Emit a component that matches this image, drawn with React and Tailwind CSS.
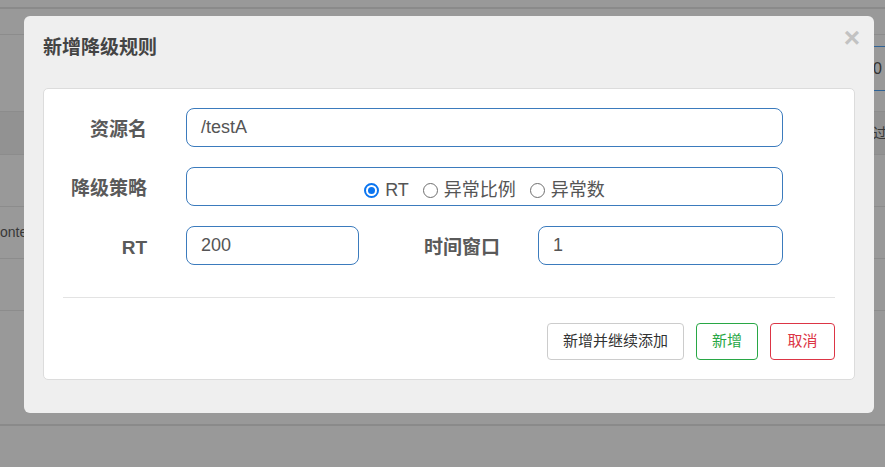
import React from 'react';

const font = "font-['Liberation_Sans','Noto_Sans_CJK_SC',sans-serif]";

const Label = ({ children, className = '' }) => (
  <div className={`text-[19px] leading-[24px] font-bold text-[#5a5a5a] ${className}`}>{children}</div>
);

const Field = ({ value, className = '' }) => (
  <div className={`h-[39px] border border-[#3b7bbd] rounded-[8px] bg-white px-[14px] flex items-center text-[18px] text-[#555] ${className}`}>
    {value}
  </div>
);

const Radio = ({ label, checked }) => (
  <div className="flex items-center gap-[6px] text-[18px] text-[#555]">
    {checked ? (
      <span className="w-[15px] h-[15px] rounded-full border-2 border-[#0b75f0] flex items-center justify-center">
        <span className="w-[7px] h-[7px] rounded-full bg-[#0b75f0]" />
      </span>
    ) : (
      <span className="w-[15px] h-[15px] rounded-full border border-[#6f6f6f] bg-white" />
    )}
    <span>{label}</span>
  </div>
);

const App = () => {
  return (
    <div className={`relative w-[885px] h-[467px] overflow-hidden bg-[#999] ${font}`}>
      {/* page behind the overlay */}
      <div className="flex flex-col text-[14px] text-[#383838]">
        <div className="h-[9px] border-b-2 border-[#8a8a8a]" />
        <div className="h-[26px] border-b border-[#8c8c8c]" />
        <div className="h-[77px] border-b border-[#8c8c8c] flex justify-end items-start">
          <div className="mt-[11px] w-[20px] h-[45px] border-y border-[#2f6396] flex items-center pl-[8px] text-[16px] text-[#333]">0</div>
        </div>
        <div className="h-[43px] bg-[#929292] border-b border-[#8c8c8c] flex justify-end items-center">
          <span className="w-[12px] overflow-hidden whitespace-nowrap">过滤</span>
        </div>
        <div className="h-[52px] border-b border-[#8c8c8c]" />
        <div className="h-[52px] border-b border-[#8c8c8c] flex items-center overflow-hidden">
          <span className="-ml-[7px] whitespace-nowrap">context</span>
        </div>
        <div className="h-[52px] border-b border-[#8c8c8c]" />
        <div className="h-[115px] border-b-2 border-[#8a8a8a]" />
      </div>

      {/* modal */}
      <div className="absolute left-[24px] top-[16px] w-[850px] h-[397px] bg-[#efefef] rounded-[6px] px-[19px] pt-[18px]">
        <span className="absolute right-[14px] top-[8px] text-[28px] leading-[28px] font-bold text-[#c2c2c2]">×</span>
        <h3 className="h-[28px] leading-[28px] text-[19px] font-bold text-[#444]">新增降级规则</h3>

        <div className="mt-[26px] w-[812px] bg-white border border-[#dcdcdc] rounded-[5px] pt-[19px] pb-[19px]">
          <div className="flex flex-col gap-[20px]">
            <div className="flex items-center">
              <Label className="w-[103px] text-right mt-[5px]">资源名</Label>
              <Field value="/testA" className="ml-[39px] w-[597px]" />
            </div>
            <div className="flex items-center">
              <Label className="w-[103px] text-right mt-[5px]">降级策略</Label>
              <div className="ml-[39px] w-[597px] h-[39px] border border-[#3b7bbd] rounded-[8px] flex items-center justify-center gap-[14px] pt-[8px]">
                <Radio label="RT" checked />
                <Radio label="异常比例" />
                <Radio label="异常数" />
              </div>
            </div>
            <div className="flex items-center">
              <Label className="w-[103px] text-right mt-[5px]">RT</Label>
              <Field value="200" className="ml-[39px] w-[173px]" />
              <Label className="ml-[65px] w-[76px] mt-[5px]">时间窗口</Label>
              <Field value="1" className="ml-[38px] w-[245px]" />
            </div>
          </div>

          <div className="mx-[19px] mt-[32px] border-t border-[#e3e3e3]" />

          <div className="mt-[25px] pr-[19px] flex justify-end gap-[12px] text-[15px]">
            <button className="h-[37px] w-[137px] border border-[#cccccc] rounded-[4px] bg-white text-[#333]">新增并继续添加</button>
            <button className="h-[37px] w-[62px] border border-[#28a745] rounded-[4px] bg-white text-[#28a745]">新增</button>
            <button className="h-[37px] w-[65px] border border-[#dc3545] rounded-[4px] bg-white text-[#dc3545]">取消</button>
          </div>
        </div>
      </div>
    </div>
  );
};

export default App;
